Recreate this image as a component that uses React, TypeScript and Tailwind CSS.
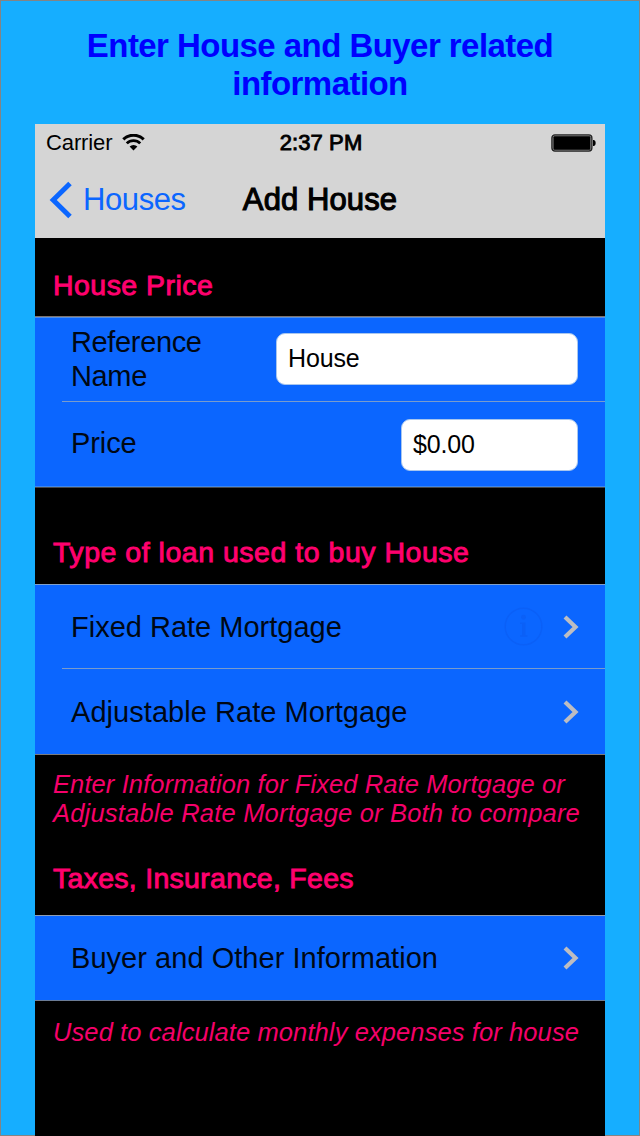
import React from "react";

const headerText = "text-[28.5px] text-[#ff006e] [-webkit-text-stroke:0.9px_#ff006e] whitespace-nowrap leading-[34px]";
const labelText = "text-[#000814] text-[29px] leading-[34px] whitespace-nowrap";
const noteText = "italic text-[#f5006a] text-[25.5px] leading-[29px] whitespace-nowrap";
const fieldBox = "flex h-[52px] items-center rounded-[9px] border border-[#a8c6ee] bg-white pl-[11px] text-[25px] tracking-[-0.15px] text-black";

function Chevron() {
  return (
    <svg className="block h-[24px] w-[16px] shrink-0" viewBox="0 0 16 24" fill="none">
      <path d="M2 2 L12.5 12 L2 22" stroke="#bdbdc2" strokeWidth="4.2" />
    </svg>
  );
}

function StatusBar() {
  return (
    <div className="grid h-[38px] grid-cols-3 items-center pl-[11px] pr-[9px] text-[22px] leading-[26px] text-black">
      <div className="flex items-center gap-[10px]">
        <span className="tracking-[-0.12px]">Carrier</span>
        <svg className="mb-px block h-[17px] w-[23px]" viewBox="0 0 23 17" fill="none" stroke="#000">
          <path d="M1.3 5.4 A14.5 14.5 0 0 1 21.7 5.4" strokeWidth="3" />
          <path d="M4.8 9.4 A9.3 9.3 0 0 1 18.2 9.4" strokeWidth="2.8" />
          <path d="M7.6 12.6 A5.3 5.3 0 0 1 15.4 12.6 L11.5 16.5 Z" fill="#000" stroke="none" />
        </svg>
      </div>
      <div className="text-center tracking-[0.1px] [-webkit-text-stroke:0.9px_#000]">2:37 PM</div>
      <svg className="block h-[18px] w-[45px] justify-self-end" viewBox="0 0 45 18">
        <rect x="0.9" y="0.9" width="40" height="16.2" rx="3" fill="#8a8a8a" stroke="#222" strokeWidth="1.3" />
        <rect x="2.5" y="2.3" width="36.8" height="13.4" rx="1" fill="#000" />
        <path d="M42 6 h1 q1.7 0.6 1.7 3 q0 2.4 -1.7 3 h-1 z" fill="#000" />
      </svg>
    </div>
  );
}

function NavBar() {
  return (
    <div className="grid h-[76px] grid-cols-[1fr_auto_1fr] items-center pl-[14px] pr-[14px] text-[31px] leading-[36px]">
      <div className="flex items-center gap-[11px] text-[#0b66ff]">
        <svg className="block h-[38px] w-[23px]" viewBox="0 0 23 38" fill="none">
          <path d="M21 2.5 L4.2 19 L21 35.5" stroke="#0b66ff" strokeWidth="5" />
        </svg>
        <span className="tracking-[-0.4px]">Houses</span>
      </div>
      <span className="tracking-[0.1px] text-black [-webkit-text-stroke:1.1px_#000]">Add House</span>
      <span />
    </div>
  );
}

export default function App() {
  return (
    <div className="flex h-[1136px] w-[640px] flex-col border border-[#848484] bg-[#16aeff] px-[34px] font-['Liberation_Sans',Arial,sans-serif]">
      <h1 className="h-[123px] shrink-0 pt-[26px] text-center text-[33px] font-bold leading-[38px] tracking-[-0.55px] text-[#0000ff]">
        <span className="block whitespace-nowrap">Enter House and Buyer related</span>
        <span className="block">information</span>
      </h1>
      <div className="-mb-px flex flex-1 flex-col bg-black">
        <header className="h-[114px] shrink-0 bg-[#d5d5d5]">
          <StatusBar />
          <NavBar />
        </header>

        <h2 className={`h-[78px] pl-[18px] pt-[30px] tracking-[0.45px] ${headerText}`}>House Price</h2>
        <section className="h-[172px] border-y border-t-[#7d7370] border-b-[#484848] bg-[#0b66ff] shadow-[inset_0_1px_0_#4f8fe9,inset_0_-1px_0_#3c86ee]">
          <div className="flex h-[84px] items-center justify-between pl-9 pr-[27px]">
            <div className={`tracking-[-0.35px] ${labelText}`}>
              Reference
              <br />
              Name
            </div>
            <div className={`w-[302px] ${fieldBox}`}>House</div>
          </div>
          <div className="ml-[27px] h-px bg-[#7a9ccb]" />
          <div className="flex h-[85px] items-center justify-between pl-9 pr-[27px]">
            <div className={`pb-1 tracking-[-0.1px] ${labelText}`}>Price</div>
            <div className={`w-[177px] ${fieldBox}`}>$0.00</div>
          </div>
        </section>

        <h2 className={`h-[96px] pl-[18px] pt-[47px] tracking-[0.52px] ${headerText}`}>
          Type of loan used to buy House
        </h2>
        <section className="h-[171px] border-y border-t-[#7fa0cc] border-b-[#7b7c7e] bg-[#0b66ff]">
          <div className="flex h-[83px] items-center pl-9 pr-[26px]">
            <div className={`flex-1 ${labelText}`}>Fixed Rate Mortgage</div>
            <svg className="mr-[20px] block size-[39px]" viewBox="0 0 40 40" fill="none">
              <circle cx="20" cy="20" r="18.8" stroke="#0b60f7" strokeWidth="1.5" />
              <circle cx="20" cy="10.5" r="2.5" fill="#0b60f7" />
              <path d="M16.5 16 h5.5 v13 h2 v1.5 h-7.5 v-1.5 h2 v-11.5 h-2 z" fill="#0b60f7" />
            </svg>
            <Chevron />
          </div>
          <div className="ml-[27px] h-px bg-[#7a9ccb]" />
          <div className="flex h-[85px] items-center pl-9 pr-[26px]">
            <div className={`flex-1 tracking-[0.05px] ${labelText}`}>Adjustable Rate Mortgage</div>
            <Chevron />
          </div>
        </section>

        <p className={`h-[106px] pl-[18px] pt-[15px] ${noteText}`}>
          <span className="block tracking-[0.1px]">Enter Information for Fixed Rate Mortgage or</span>
          <span className="block tracking-[0.19px]">Adjustable Rate Mortgage or Both to compare</span>
        </p>
        <h2 className={`h-[54px] pl-[18px] tracking-[0.28px] ${headerText}`}>Taxes, Insurance, Fees</h2>
        <section className="h-[86px] border-y border-t-[#8e9db4] border-b-[#6c7c96] bg-[#0b66ff]">
          <div className="flex h-[84px] items-center pl-9 pr-[26px]">
            <div className={`flex-1 tracking-[0.04px] ${labelText}`}>Buyer and Other Information</div>
            <Chevron />
          </div>
        </section>
        <p className={`pl-[18px] pt-[17px] tracking-[0.1px] ${noteText}`}>Used to calculate monthly expenses for house</p>
      </div>
    </div>
  );
}
